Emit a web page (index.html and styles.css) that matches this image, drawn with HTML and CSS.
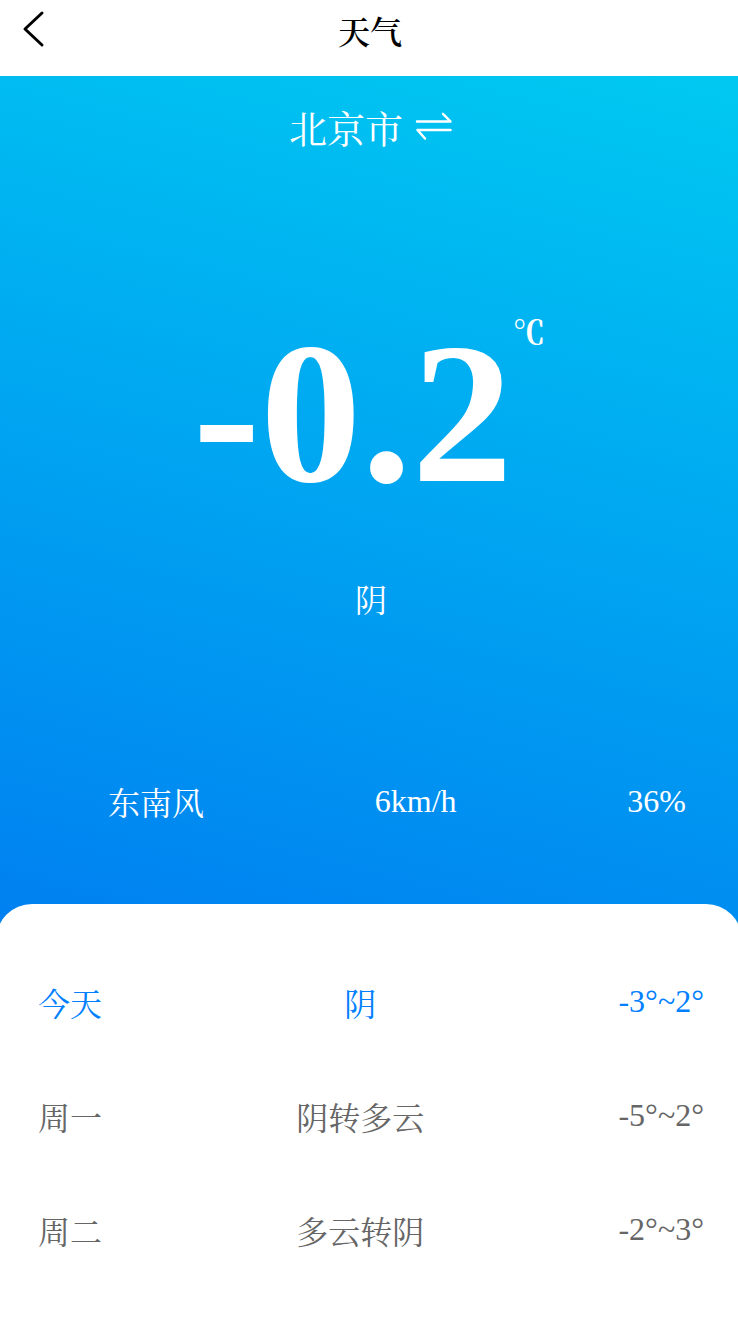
FILE: index.html
```html
<!DOCTYPE html>
<html lang="zh-CN">
<head>
<meta charset="utf-8">
<meta name="viewport" content="width=device-width, initial-scale=1">
<title>天气</title>
<link rel="stylesheet" href="styles.css">
</head>
<body>
<header class="topbar">
  <button class="back" type="button" aria-label="返回">
    <svg width="24" height="36" viewBox="0 0 24 36" aria-hidden="true"><path d="M20 2 3 18 20 34"/></svg>
  </button>
  <h1 class="title">天气</h1>
</header>
<main class="weather">
  <section class="now">
    <button class="city" type="button">
      <span>北京市</span>
      <svg width="38" height="34" viewBox="0 0 38 34" aria-hidden="true"><path d="M2 8.500H35.500L28 0.800M35.500 17H2.500L10 25.500"/></svg>
    </button>
    <p class="temp"><span class="value">-0.2</span><span class="unit">℃</span></p>
    <p class="state">阴</p>
    <ul class="facts">
      <li class="wind">东南风</li>
      <li>6km/h</li>
      <li>36%</li>
    </ul>
  </section>
  <section class="panel">
    <table class="forecast">
      <tbody>
        <tr class="today"><td>今天</td><td class="sky">阴</td><td class="range">-3°~2°</td></tr>
        <tr><td>周一</td><td class="sky">阴转多云</td><td class="range">-5°~2°</td></tr>
        <tr><td>周二</td><td class="sky">多云转阴</td><td class="range">-2°~3°</td></tr>
      </tbody>
    </table>
  </section>
</main>
</body>
</html>
```

FILE: styles.css
```css
* { box-sizing: border-box; }
body {
  margin: 0;
  min-height: 100vh;
  display: flex;
  flex-direction: column;
  background: #fff;
  font-family: "Liberation Serif", "Noto Serif CJK SC", "Noto Sans CJK SC", serif;
  font-size: 32px;
  line-height: 40px;
}
button {
  padding: 0;
  border: 0;
  background: none;
  color: inherit;
  font: inherit;
}
svg {
  display: block;
  overflow: visible;
  fill: none;
  stroke: currentColor;
  stroke-width: 3;
  stroke-linecap: round;
  stroke-linejoin: round;
}
.topbar {
  padding: 11px 20px 23px 22px;
  display: grid;
  grid-template-columns: 1fr auto 1fr;
  align-items: start;
}
.back { justify-self: start; color: #000; }
.title { margin: 0; padding-top: 2px; font-size: 32px; font-weight: 600; line-height: 40px; }
.weather {
  flex: 1;
  display: flex;
  flex-direction: column;
  overflow: hidden;
  background: linear-gradient(194deg, #00c9f1, #0080f1 1000px);
}
.now {
  padding: 32px 0 80px;
  display: flex;
  flex-direction: column;
  color: #fff;
}
.city {
  align-self: center;
  padding: 2px 0 0 4px;
  display: flex;
  align-items: center;
  gap: 12px;
  font-size: 38px;
}
.city svg { stroke-width: 2.500; }
.temp {
  margin: 143px 0 0;
  display: flex;
  justify-content: center;
  align-items: flex-start;
  font-weight: bold;
}
.value { font-size: 202px; line-height: 240px; }
.unit { padding-top: 20px; }
.state { margin: 48px 0 0; padding-left: 4px; text-align: center; }
.facts {
  margin: 160px 0 0;
  padding: 0 52px 0 108px;
  display: flex;
  justify-content: space-between;
  list-style: none;
}
.wind { padding-top: 3px; }
.panel {
  flex: 1;
  margin: 0 -4px;
  padding: 42px 38px 28px 42px;
  border-radius: 36px 36px 0 0;
  background: #fff;
  color: #666;
}
.forecast {
  width: 100%;
  border-collapse: collapse;
}
.forecast td { height: 114px; padding: 4px 0 0; white-space: nowrap; }
.forecast .range { padding: 0 0 4px; }
.forecast .sky { width: 100%; text-align: center; }
.today { color: #0080ff; }
```
